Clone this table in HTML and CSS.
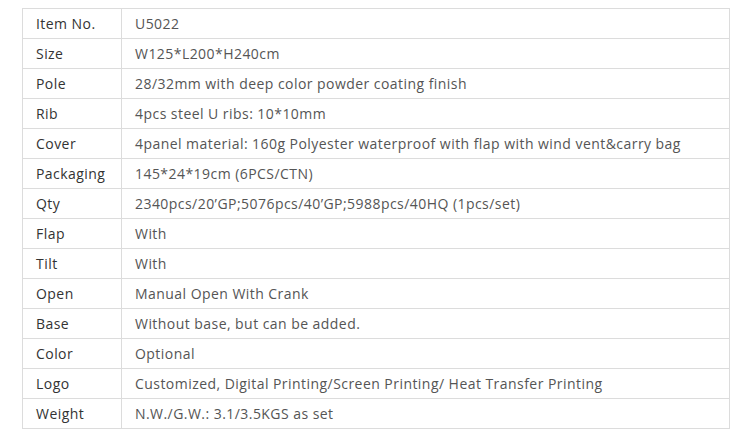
FILE: index.html
```html
<!DOCTYPE html>
<html>
<head>
<meta charset="utf-8">
<link rel="stylesheet" href="styles.css">
</head>
<body>
<div class="wrap">
<table class="spec">
<tbody>
<tr><td class="k">Item No.</td><td class="v">U5022</td></tr>
<tr><td class="k">Size</td><td class="v">W125*L200*H240cm</td></tr>
<tr><td class="k">Pole</td><td class="v">28/32mm with deep color powder coating finish</td></tr>
<tr><td class="k">Rib</td><td class="v">4pcs steel U ribs: 10*10mm</td></tr>
<tr><td class="k">Cover</td><td class="v">4panel material: 160g Polyester waterproof with flap with wind vent&amp;carry bag</td></tr>
<tr><td class="k">Packaging</td><td class="v">145*24*19cm (6PCS/CTN)</td></tr>
<tr><td class="k">Qty</td><td class="v">2340pcs/20’GP;5076pcs/40’GP;5988pcs/40HQ (1pcs/set)</td></tr>
<tr><td class="k">Flap</td><td class="v">With</td></tr>
<tr><td class="k">Tilt</td><td class="v">With</td></tr>
<tr><td class="k">Open</td><td class="v">Manual Open With Crank</td></tr>
<tr><td class="k">Base</td><td class="v">Without base, but can be added.</td></tr>
<tr><td class="k">Color</td><td class="v">Optional</td></tr>
<tr><td class="k">Logo</td><td class="v">Customized, Digital Printing/Screen Printing/ Heat Transfer Printing</td></tr>
<tr><td class="k">Weight</td><td class="v">N.W./G.W.: 3.1/3.5KGS as set</td></tr>
</tbody>
</table>
</div>
</body>
</html>
```
FILE: styles.css
```css
html, body { margin: 0; padding: 0; background: #fff; }
.wrap { padding: 8px 20px 0 22px; }
.spec {
  border-collapse: collapse;
  width: 708px;
  font-family: "Open Sans", "Liberation Sans", sans-serif;
  font-size: 14px;
  letter-spacing: 0.45px;
}
.spec td {
  border: 1px solid #dcdcdc;
  height: 30px;
  padding: 0 0 1px 13px;
  box-sizing: border-box;
  vertical-align: middle;
  white-space: nowrap;
}
.spec .k { width: 99px; color: #333; }
.spec .v { color: #555; }
```
